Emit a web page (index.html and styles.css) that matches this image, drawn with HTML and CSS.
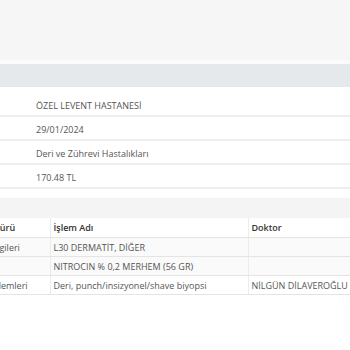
FILE: index.html
```html
<!DOCTYPE html>
<html lang="tr">
<head>
  <meta charset="UTF-8" />
  <meta name="viewport" content="width=device-width, initial-scale=1.0" />
  <title>Muayene Detayı</title>
  <link rel="stylesheet" href="styles.css">
</head>
<body>
  <div class="page">
    <div class="topbar"></div>
    <div class="panel-title"></div>

    <div class="info">
      <div class="info-row">ÖZEL LEVENT HASTANESİ</div>
      <div class="info-row">29/01/2024</div>
      <div class="info-row">Deri ve Zührevi Hastalıkları</div>
      <div class="info-row">170.48 TL</div>
    </div>

    <div class="section-bar"></div>

    <table class="detail">
      <colgroup>
        <col class="col-type">
        <col class="col-name">
        <col class="col-doctor">
      </colgroup>
      <thead>
        <tr>
          <th>İşlem Türü</th>
          <th>İşlem Adı</th>
          <th>Doktor</th>
        </tr>
      </thead>
      <tbody>
        <tr class="shaded">
          <td>Tanı Bilgileri</td>
          <td>L30 DERMATİT, DİĞER</td>
          <td></td>
        </tr>
        <tr class="shaded">
          <td></td>
          <td>NITROCIN % 0,2 MERHEM (56 GR)</td>
          <td></td>
        </tr>
        <tr>
          <td>Tıbbi İşlemleri</td>
          <td>Deri, punch/insizyonel/shave biyopsi</td>
          <td>NİLGÜN DİLAVEROĞLU</td>
        </tr>
      </tbody>
    </table>
  </div>
</body>
</html>
```

FILE: styles.css
```css
* {
  box-sizing: border-box;
}

body {
  margin: 0;
  background: #fff;
  font-family: 'Open Sans', sans-serif;
  font-size: 9px;
  color: #555;
  overflow: hidden;
}

.page {
  width: 460px;
  margin-left: -34px; /* page is scrolled sideways, first column sits off screen */
}

.topbar {
  height: 64px;
  background: #f6f6f6;
  border-bottom: 4px solid #fbfbfb;
}

.panel-title {
  height: 23px;
  background: #e6e9ec;
}

.info {
  margin-top: 6px;
}

.info-row {
  padding: 6px 0 3px 70px;
  line-height: 13px;
  border-bottom: 2px solid #eeeeee;
}

.section-bar {
  margin-top: 9px;
  height: 20px;
  background: #f4f4f4;
}

.detail {
  width: 100%;
  border-collapse: collapse;
  table-layout: fixed;
}

.col-type {
  width: 84px;
}

.col-name {
  width: 198px;
}

.detail th,
.detail td {
  text-align: left;
  line-height: 13px;
  padding: 3px 3px 2px;
  border-bottom: 1px solid #e4e4e4;
  border-right: 1px solid #ececec;
  white-space: nowrap;
  overflow: hidden;
}

.detail th {
  padding: 3px 3px 3px;
  font-weight: 600;
  color: #333;
  background: #fff;
}

.detail tr.shaded td {
  background: #fafafa;
}
```
